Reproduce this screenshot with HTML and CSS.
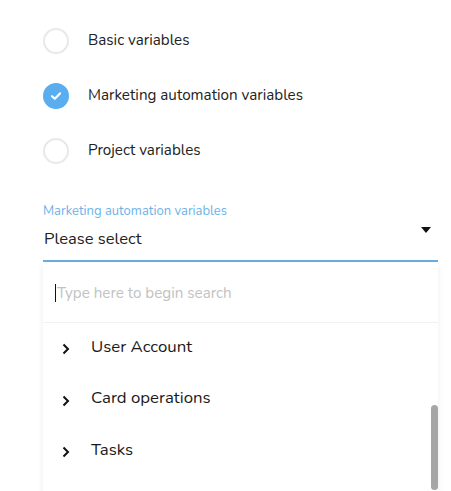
FILE: index.html
```html
<!DOCTYPE html>
<html>
<head>
<meta charset="utf-8">
<link rel="stylesheet" href="styles.css">
</head>
<body>
<div class="page">
  <div class="radios">
    <div class="radio-row"><span class="radio"></span><span class="radio-label">Basic variables</span></div>
    <div class="radio-row"><span class="radio checked"><svg width="12" height="10" viewBox="0 0 12 10"><path d="M2 5.2 L4.8 7.8 L10 2.4" fill="none" stroke="#fff" stroke-width="2.2" stroke-linecap="round" stroke-linejoin="round"/></svg></span><span class="radio-label">Marketing automation variables</span></div>
    <div class="radio-row"><span class="radio"></span><span class="radio-label">Project variables</span></div>
  </div>
  <div class="select">
    <div class="select-label">Marketing automation variables</div>
    <div class="select-value"><span class="value-text">Please select</span><span class="caret"></span></div>
  </div>
  <div class="panel">
    <div class="search"><span class="cursor"></span><span class="placeholder">Type here to begin search</span></div>
    <ul class="items">
      <li class="item"><svg class="chev" width="8" height="12" viewBox="0 0 8 12"><path d="M1.5 1.5 L6 6 L1.5 10.5" fill="none" stroke="#111" stroke-width="2"/></svg><span>User Account</span></li>
      <li class="item"><svg class="chev" width="8" height="12" viewBox="0 0 8 12"><path d="M1.5 1.5 L6 6 L1.5 10.5" fill="none" stroke="#111" stroke-width="2"/></svg><span>Card operations</span></li>
      <li class="item"><svg class="chev" width="8" height="12" viewBox="0 0 8 12"><path d="M1.5 1.5 L6 6 L1.5 10.5" fill="none" stroke="#111" stroke-width="2"/></svg><span>Tasks</span></li>
    </ul>
    <div class="scrollbar"></div>
  </div>
</div>
</body>
</html>
```
FILE: styles.css
```css
html, body {
  margin: 0;
  padding: 0;
  background: #fff;
  overflow: hidden;
}
body {
  font-family: "Nunito", Lato, "Noto Sans", sans-serif;
  color: #222;
}
.page {
  width: 451px;
  height: 491px;
  padding: 13px 13px 0 43px;
  box-sizing: border-box;
}
.radios {
  display: flex;
  flex-direction: column;
}
.radio-row {
  height: 55px;
  display: flex;
  align-items: center;
}
.radio {
  width: 22px;
  height: 22px;
  border-radius: 50%;
  border: 2px solid #e8e8e8;
  display: flex;
  align-items: center;
  justify-content: center;
  margin-right: 19px;
  flex: none;
}
.radio.checked {
  background: #5aaef0;
  border-color: #5aaef0;
}
.radio-label {
  font-size: 15.2px;
  color: #222;
  margin-top: -1px;
}
.select {
  margin-top: 25px;
  width: 395px;
  border-bottom: 2px solid #6aade2;
}
.select-label {
  font-size: 13px;
  color: #6db3e8;
  height: 16px;
  line-height: 16px;
}
.select-value {
  display: flex;
  justify-content: space-between;
  align-items: center;
  font-size: 16.5px;
  color: #222;
  height: 41px;
  padding-left: 1px;
}
.value-text {
  margin-top: -3px;
}
.caret {
  width: 0;
  height: 0;
  border-left: 5px solid transparent;
  border-right: 5px solid transparent;
  border-top: 6px solid #111;
  margin-right: 7px;
  margin-top: -20px;
}
.panel {
  position: relative;
  width: 395px;
  height: 240px;
  margin-top: 1px;
  background: #fff;
  box-shadow: 0 2px 6px rgba(0,0,0,0.08);
}
.search {
  border-bottom: 1px solid #f2f2f2;
  display: flex;
  align-items: center;
  padding-left: 12px;
  box-sizing: border-box;
  height: 60px;
}
.cursor {
  width: 1px;
  height: 18px;
  background: #111;
  margin-right: 1px;
}
.placeholder {
  font-size: 15.2px;
  color: #c2c2c2;
}
.items {
  list-style: none;
  margin: 0;
  padding: 0;
}
.item {
  height: 51.5px;
  display: flex;
  align-items: center;
  font-size: 16.8px;
  color: #1a1a1a;
  padding-left: 19px;
}
.item span {
  margin-top: -5px;
}
.chev {
  margin-right: 21px;
  margin-top: 1px;
}
.scrollbar {
  position: absolute;
  right: 0;
  top: 142px;
  width: 7px;
  height: 85px;
  border-radius: 4px;
  background: #a6a6a6;
}
```
